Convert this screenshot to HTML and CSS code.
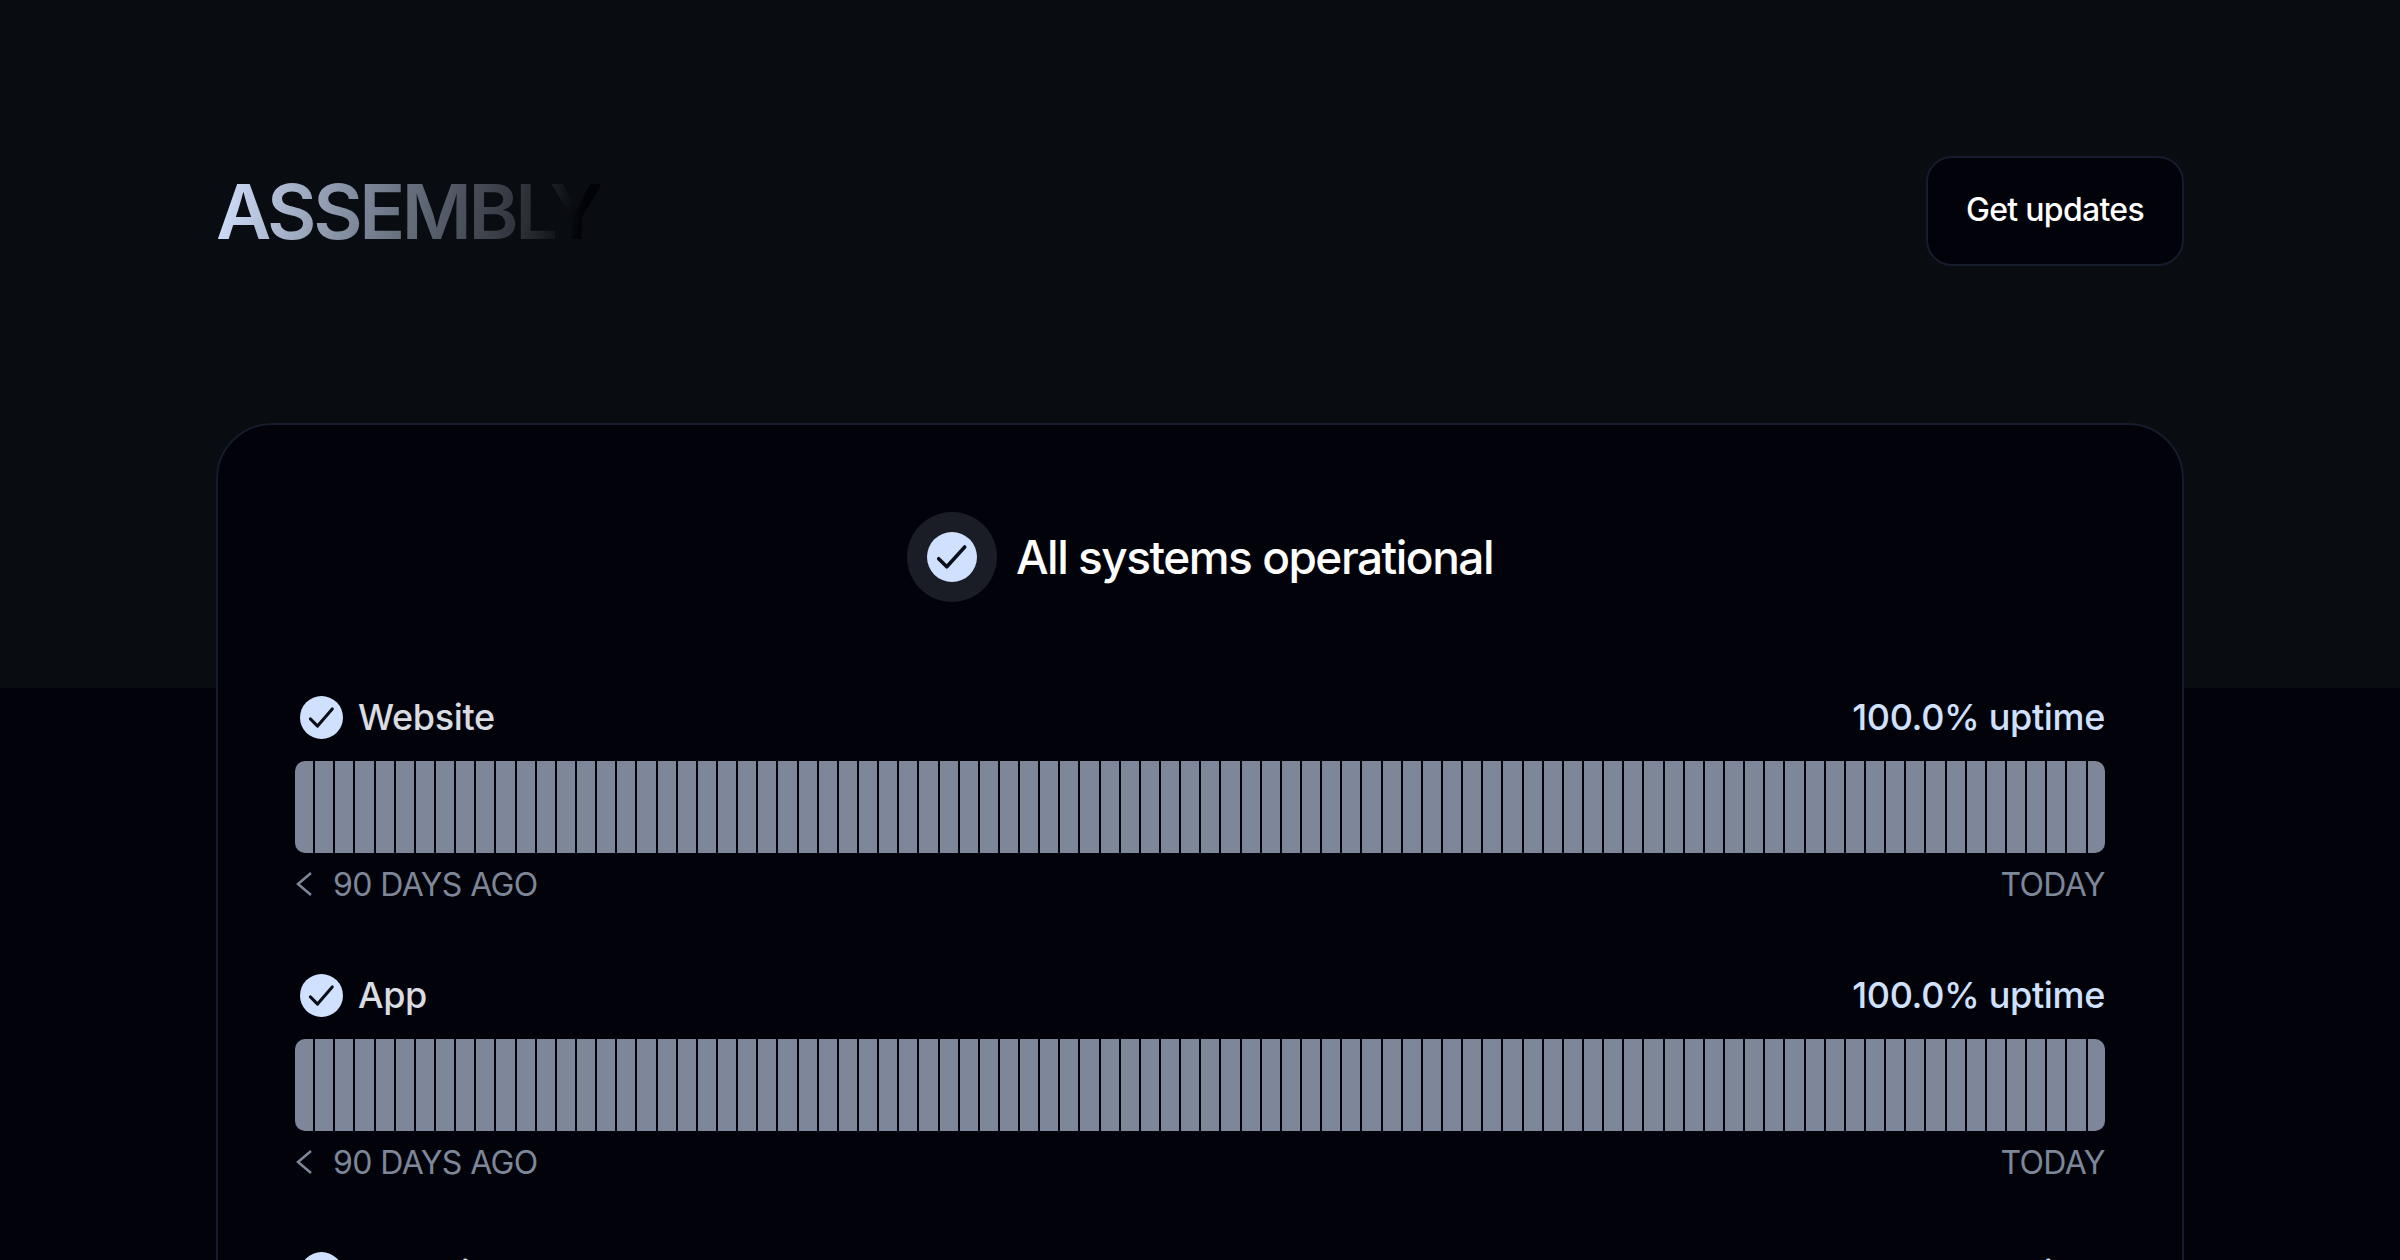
FILE: index.html
```html
<!DOCTYPE html>
<html lang="en">
<head>
  <meta charset="UTF-8">
  <meta name="viewport" content="width=device-width, initial-scale=1.0">
  <title>Assembly Status</title>
  <link rel="stylesheet" href="styles.css">
</head>
<body>
  <div class="page">
    <header class="top">
      <div class="logo">ASSEMBLY</div>
      <button class="updates-btn">Get updates</button>
    </header>

    <main class="card">
      <div class="overall">
        <span class="overall-ring">
          <svg class="check check-lg" viewBox="0 0 24 24"><circle cx="12" cy="12" r="12"/><path d="M5.600 12.800l3.900 3.900 8.600-9.500"/></svg>
        </span>
        <h1>All systems operational</h1>
      </div>

      <section class="service">
        <div class="service-head">
          <span class="service-name">
            <svg class="check" viewBox="0 0 24 24"><circle cx="12" cy="12" r="12"/><path d="M5.800 12.800l4 4 8.200-9.600"/></svg>
            <span class="name-text">Website</span>
          </span>
          <span class="uptime">100.0% uptime</span>
        </div>
        <div class="bars"></div>
        <div class="range">
          <span class="range-start">
            <svg class="chevron" viewBox="0 0 16 24"><path d="M15 1L2 12l13 11"/></svg>
            90 DAYS AGO
          </span>
          <span>TODAY</span>
        </div>
      </section>

      <section class="service">
        <div class="service-head">
          <span class="service-name">
            <svg class="check" viewBox="0 0 24 24"><circle cx="12" cy="12" r="12"/><path d="M5.800 12.800l4 4 8.200-9.600"/></svg>
            <span class="name-text">App</span>
          </span>
          <span class="uptime">100.0% uptime</span>
        </div>
        <div class="bars"></div>
        <div class="range">
          <span class="range-start">
            <svg class="chevron" viewBox="0 0 16 24"><path d="M15 1L2 12l13 11"/></svg>
            90 DAYS AGO
          </span>
          <span>TODAY</span>
        </div>
      </section>

      <section class="service">
        <div class="service-head">
          <span class="service-name">
            <svg class="check" viewBox="0 0 24 24"><circle cx="12" cy="12" r="12"/><path d="M5.800 12.800l4 4 8.200-9.600"/></svg>
            <span class="name-text">Android</span>
          </span>
          <span class="uptime">100.0% uptime</span>
        </div>
      </section>
    </main>
  </div>

  <script>
    document.querySelectorAll(".bars").forEach(row => {
      for (let i = 0; i < 90; i++) {
        const day = document.createElement("div");
        day.className = "day";
        row.appendChild(day);
      }
    });
  </script>
</body>
</html>
```

FILE: styles.css
```css
html, body {
  margin: 0;
  padding: 0;
  height: 1260px;
  overflow: hidden;
}

body {
  font-family: Inter, "Liberation Sans", sans-serif;
  background: linear-gradient(to bottom, #090c11 688px, #02030a 688px);
  color: #fff;
}

.page {
  padding: 156px 216px 0;
}

.top {
  display: flex;
  justify-content: space-between;
  align-items: center;
  margin-bottom: 157px;
}

.logo {
  font-size: 76px;
  font-weight: 600;
  line-height: 1;
  letter-spacing: -3.4px;
  background: linear-gradient(100deg, #d3e2ff 0%, #7d8799 38%, #2c2f36 80%, #02030a 94%);
  -webkit-background-clip: text;
  background-clip: text;
  color: transparent;
}

.updates-btn {
  width: 258px;
  height: 110px;
  padding: 0 0 3px;
  background: #02030a;
  border: 2px solid #161c2c;
  border-radius: 26px;
  color: #fff;
  font-family: inherit;
  font-size: 32px;
  font-weight: 500;
  letter-spacing: -0.7px;
  cursor: pointer;
}

.card {
  background: #02030a;
  border: 2px solid #161c2c;
  border-radius: 56px;
  padding: 87px 77px 0;
}

.overall {
  display: flex;
  justify-content: center;
  align-items: center;
  gap: 19px;
  margin-bottom: 94px;
}

.overall h1 {
  margin: 0;
  font-size: 46px;
  font-weight: 500;
  letter-spacing: -1.5px;
}

.overall-ring {
  display: flex;
  justify-content: center;
  align-items: center;
  width: 90px;
  height: 90px;
  border-radius: 50%;
  background: #1a1d26;
}

.check {
  width: 43px;
  height: 43px;
  flex-shrink: 0;
}

.check-lg {
  width: 50px;
  height: 50px;
}

.check circle {
  fill: #d0e1ff;
}

.check path {
  fill: none;
  stroke: #0b0e16;
  stroke-width: 1.7;
  stroke-linecap: round;
  stroke-linejoin: round;
}

.service {
  margin-bottom: 71px;
}

.service-head {
  display: flex;
  justify-content: space-between;
  align-items: center;
  height: 43px;
  margin-bottom: 22px;
  font-size: 36px;
  font-weight: 500;
  letter-spacing: -0.35px;
  line-height: 40px;
}

.service-name {
  display: flex;
  align-items: center;
  gap: 15px;
  padding-left: 5px;
  color: #d9dce2;
}

.name-text {
  padding-bottom: 2px;
}

.uptime {
  padding-bottom: 2px;
  color: #d0e1ff;
}

.bars {
  display: flex;
  gap: 2px;
  height: 92px;
  border-radius: 10px;
  overflow: hidden;
}

.day {
  flex: 1;
  background: #7d8799;
}

.range {
  display: flex;
  justify-content: space-between;
  align-items: center;
  height: 38px;
  margin-top: 12px;
  font-size: 32px;
  letter-spacing: -0.6px;
  color: #7d8799;
}

.range-start {
  display: flex;
  align-items: center;
  gap: 21px;
  padding-left: 1px;
}

.chevron {
  width: 16px;
  height: 24px;
}

.chevron path {
  fill: none;
  stroke: #7d8799;
  stroke-width: 2.5;
}
```
